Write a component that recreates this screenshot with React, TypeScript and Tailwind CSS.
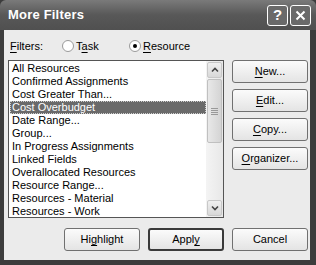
import React from "react";

const font = { fontFamily: '"Liberation Sans", Arial, sans-serif' };

function U({ children }: { children: React.ReactNode }) {
  return <span className="underline underline-offset-[2px]">{children}</span>;
}

function Btn({ children, def }: { children: React.ReactNode; def?: boolean }) {
  return (
    <div
      className={`h-[23px] w-[76px] flex items-center justify-center rounded-[3px] bg-gradient-to-b from-[#fbfbfb] to-[#e4e4e4] text-[11px] text-black ${
        def ? "border-2 border-[#3a3a3a]" : "border border-[#707070]"
      }`}
    >
      {children}
    </div>
  );
}

const items = [
  "All Resources",
  "Confirmed Assignments",
  "Cost Greater Than...",
  "Cost Overbudget",
  "Date Range...",
  "Group...",
  "In Progress Assignments",
  "Linked Fields",
  "Overallocated Resources",
  "Resource Range...",
  "Resources - Material",
  "Resources - Work",
];

export default function App() {
  return (
    <div className="w-[316px] h-[265px] bg-[#3c3c3c] flex flex-col overflow-hidden" style={font}>
      <div className="h-[30px] flex items-center justify-between pl-[8px] pr-[5px] bg-gradient-to-b from-[#7a7a7a] via-[#585858] to-[#505050] rounded-t-[6px]">
        <span className="text-white font-bold text-[13px] tracking-[0.2px]">More Filters</span>
        <div className="flex gap-[2px]">
          <div className="w-[21px] h-[21px] rounded-[3px] border border-white bg-[#6a6a6a] flex items-center justify-center text-white font-bold text-[15px]">?</div>
          <div className="w-[21px] h-[21px] rounded-[3px] border border-white bg-[#6a6a6a] flex items-center justify-center">
            <svg width="11" height="11" viewBox="0 0 11 11">
              <path d="M1.5 1.5 L9.5 9.5 M9.5 1.5 L1.5 9.5" stroke="white" strokeWidth="2" />
            </svg>
          </div>
        </div>
      </div>
      <div className="flex-1 ml-[4px] mr-[6px] mb-[5px] bg-[#ebebeb] flex flex-col text-[11px] text-black">
        <div className="h-[30px] flex items-center pl-[6px] pt-[2px]">
          <span className="w-[52px]"><U>F</U>ilters:</span>
          <div className="flex items-center gap-[2px] w-[67px]">
            <span className="w-[12px] h-[12px] rounded-full border border-[#9a9a9a] bg-white" />
            <span>T<U>a</U>sk</span>
          </div>
          <div className="flex items-center gap-[2px]">
            <span className="w-[12px] h-[12px] rounded-full border border-[#9a9a9a] bg-white flex items-center justify-center">
              <span className="w-[4px] h-[4px] rounded-full bg-black" />
            </span>
            <span><U>R</U>esource</span>
          </div>
        </div>
        <div className="flex pl-[4px]">
          <div className="w-[216px] h-[158px] border border-[#555] bg-white flex">
            <div className="flex-1 pt-[1px] pl-[1px]">
              {items.map((it) => (
                <div
                  key={it}
                  className={`h-[13px] leading-[11px] pl-[1px] ${
                    it === "Cost Overbudget"
                      ? "bg-[#6a6a6a] text-white border border-dotted border-[#cfcfcf]"
                      : "border border-transparent"
                  }`}
                >
                  {it}
                </div>
              ))}
            </div>
            <div className="w-[17px] bg-gradient-to-r from-[#f4f4f4] to-[#e8e8e8] flex flex-col p-[1px]">
              <div className="h-[16px] rounded-[2px] border border-[#c8c8c8] bg-gradient-to-b from-[#f0f0f0] to-[#d8d8d8] flex items-center justify-center">
                <svg width="8" height="6" viewBox="0 0 8 6"><path d="M1 4.5 L4 1.5 L7 4.5" stroke="#444" strokeWidth="1.6" fill="none" /></svg>
              </div>
              <div className="h-[64px] mt-[1px] rounded-[2px] border border-[#c0c0c0] bg-gradient-to-r from-[#e8e8e8] to-[#d4d4d4] flex flex-col items-center justify-center gap-[1px]">
                <span className="w-[7px] h-[1px] bg-[#999]" />
                <span className="w-[7px] h-[1px] bg-[#999]" />
                <span className="w-[7px] h-[1px] bg-[#999]" />
                <span className="w-[7px] h-[1px] bg-[#999]" />
              </div>
              <div className="flex-1" />
              <div className="h-[16px] rounded-[2px] border border-[#c8c8c8] bg-gradient-to-b from-[#f0f0f0] to-[#d8d8d8] flex items-center justify-center">
                <svg width="8" height="6" viewBox="0 0 8 6"><path d="M1 1.5 L4 4.5 L7 1.5" stroke="#444" strokeWidth="1.6" fill="none" /></svg>
              </div>
            </div>
          </div>
          <div className="ml-[8px] flex flex-col gap-[6px]">
            <Btn><U>N</U>ew...</Btn>
            <Btn><U>E</U>dit...</Btn>
            <Btn><U>C</U>opy...</Btn>
            <Btn><U>O</U>rganizer...</Btn>
          </div>
        </div>
        <div className="flex justify-end gap-[8px] pr-[2px] mt-[10px]">
          <Btn>Hi<U>g</U>hlight</Btn>
          <Btn def>Appl<U>y</U></Btn>
          <Btn>Cancel</Btn>
        </div>
      </div>
    </div>
  );
}
